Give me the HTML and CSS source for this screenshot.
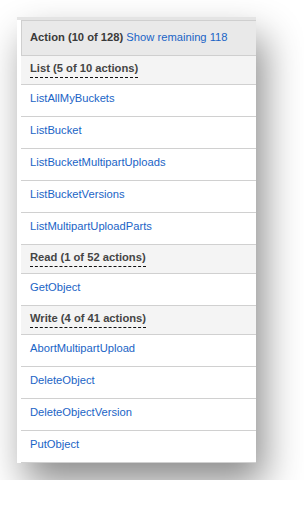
FILE: index.html
```html
<!DOCTYPE html>
<html lang="en">

<head>
    <meta charset="UTF-8">
    <meta name="viewport" content="width=device-width, initial-scale=1.0">
    <title>Actions</title>
    <link rel="stylesheet" href="styles.css">
</head>

<body>
    <div class="card">
        <div class="inner">
            <div class="head">
                Action (10 of 128) <a href="#" class="link">Show remaining 118</a>
            </div>

            <div class="group"><span>List (5 of 10 actions)</span></div>
            <div class="row"><a href="#" class="link">ListAllMyBuckets</a></div>
            <div class="row"><a href="#" class="link">ListBucket</a></div>
            <div class="row"><a href="#" class="link">ListBucketMultipartUploads</a></div>
            <div class="row"><a href="#" class="link">ListBucketVersions</a></div>
            <div class="row"><a href="#" class="link">ListMultipartUploadParts</a></div>

            <div class="group"><span>Read (1 of 52 actions)</span></div>
            <div class="row"><a href="#" class="link">GetObject</a></div>

            <div class="group"><span>Write (4 of 41 actions)</span></div>
            <div class="row"><a href="#" class="link">AbortMultipartUpload</a></div>
            <div class="row"><a href="#" class="link">DeleteObject</a></div>
            <div class="row"><a href="#" class="link">DeleteObjectVersion</a></div>
            <div class="row"><a href="#" class="link">PutObject</a></div>
        </div>
    </div>
</body>

</html>
```

FILE: styles.css
```css
body,
html {
    margin: 0;
    background-color: #fff;
}

body {
    padding: 17px;
    font-family: "Liberation Sans", Arial, sans-serif;
    font-size: 11.2px;
    line-height: 14px;
}

.card {
    width: 239px;
    background-color: #fff;
    border-top: 3px solid #e4e4e4;
    box-shadow: 8px 20px 36px rgba(0, 0, 0, 0.45);
}

.inner {
    margin-left: 4px;
}

.link {
    color: #1a64c6;
    text-decoration: none;
}

.head {
    background-color: #e9e9e9;
    border: 1px solid #cfcfcf;
    border-right: none;
    padding: 9px 8px 11px;
    font-weight: bold;
    color: #3a3a3a;
}

.head .link {
    font-weight: normal;
}

.group {
    background-color: #f4f4f4;
    border-bottom: 1px solid #d0d0d0;
    padding: 5px 9px 6px;
}

.group span {
    display: inline-block;
    padding-bottom: 2px;
    border-bottom: 1px dashed #111;
    font-weight: bold;
    color: #444;
}

.row {
    padding: 6px 9px 11px;
    border-bottom: 1px solid #d0d0d0;
}
```
